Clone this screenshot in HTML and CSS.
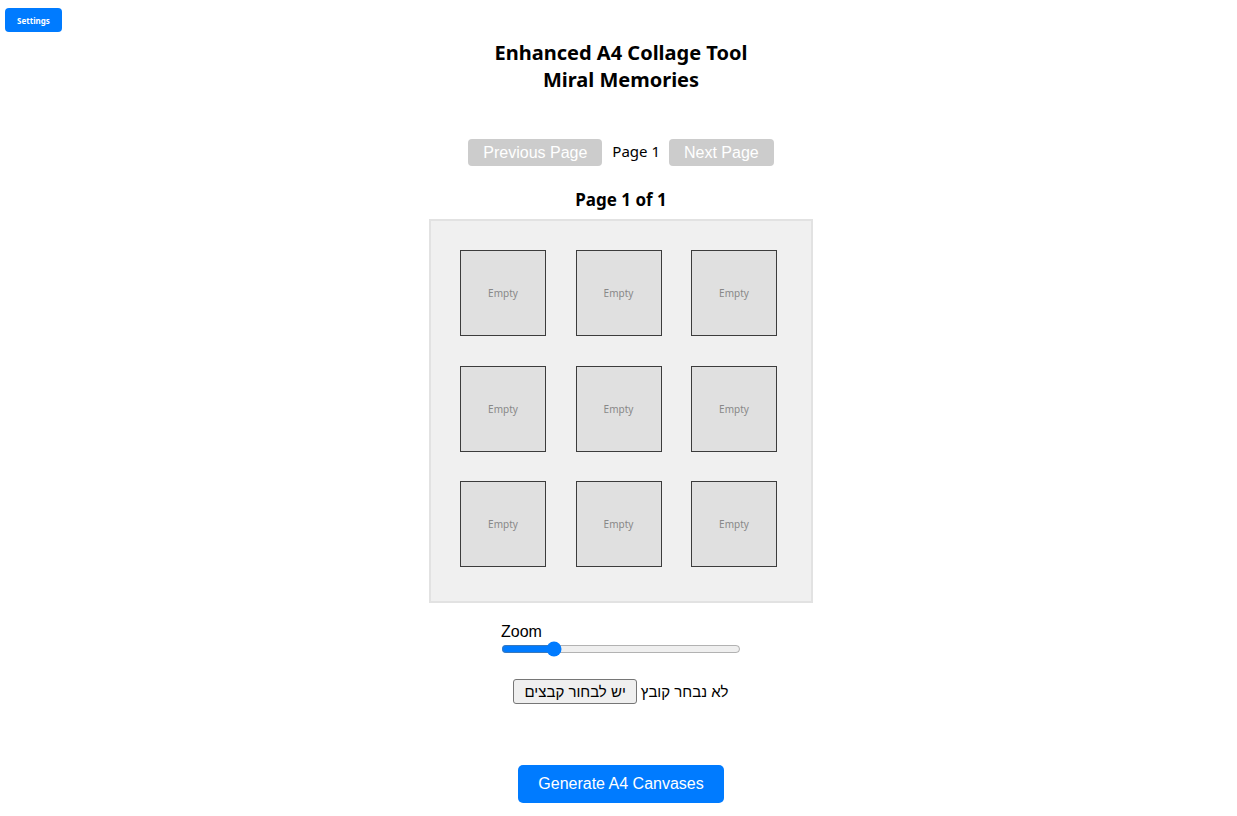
FILE: index.html
```html
<!DOCTYPE html>
<html lang="en">
<head>
<meta charset="utf-8">
<title>Enhanced A4 Collage Tool</title>
<link rel="stylesheet" href="styles.css">
</head>
<body>
<button class="settings-btn">Settings</button>
<main class="app">
  <h1 class="title">Enhanced A4 Collage Tool<br>Miral Memories</h1>
  <div class="pager">
    <button class="pager-btn" disabled>Previous Page</button>
    <span class="pager-label">Page 1</span>
    <button class="pager-btn" disabled>Next Page</button>
  </div>
  <div class="page-heading">Page 1 of 1</div>
  <div class="canvas">
    <div class="cell">Empty</div>
    <div class="cell">Empty</div>
    <div class="cell">Empty</div>
    <div class="cell">Empty</div>
    <div class="cell">Empty</div>
    <div class="cell">Empty</div>
    <div class="cell">Empty</div>
    <div class="cell">Empty</div>
    <div class="cell">Empty</div>
  </div>
  <div class="zoom">
    <label class="zoom-label" for="zoom">Zoom</label>
    <input class="zoom-range" id="zoom" type="range" min="0.5" max="3" step="0.1" value="1">
  </div>
  <div class="file-row">
    <button class="file-btn">יש לבחור קבצים</button>
    <span class="file-text">לא נבחר קובץ</span>
  </div>
  <button class="generate-btn">Generate A4 Canvases</button>
</main>
</body>
</html>
```
FILE: styles.css
```css
body {
  margin: 0;
  font-family: "Noto Sans", "DejaVu Sans", sans-serif;
  color: #000;
  background: #fff;
}

.settings-btn {
  position: fixed;
  top: 8px;
  left: 5px;
  width: 57px;
  height: 24px;
  border: none;
  border-radius: 4px;
  background: #007bff;
  color: #fff;
  font-family: "Noto Sans", sans-serif;
  font-size: 8px;
  font-weight: 700;
  padding: 0;
}

.app {
  display: flex;
  flex-direction: column;
  align-items: center;
  padding-top: 39px;
  padding-left: 5px;
}

.title {
  margin: 0;
  font-size: 20px;
  font-weight: 700;
  line-height: 27px;
  text-align: center;
}

.pager {
  display: flex;
  align-items: center;
  margin-top: 46px;
  height: 27px;
}

.pager-btn {
  height: 27px;
  padding: 0 15px;
  border: none;
  border-radius: 4px;
  background: #cccccc;
  color: #fff;
  font-family: "Liberation Sans", Arial, sans-serif;
  font-size: 16px;
}

.pager-label {
  margin: 0 9px 0 10px;
  font-size: 15px;
  line-height: 20px;
  position: relative;
  top: -2px;
}

.page-heading {
  margin-top: 22px;
  font-size: 17px;
  font-weight: 700;
  line-height: 23px;
}

.canvas {
  margin-top: 8px;
  box-sizing: border-box;
  width: 384px;
  height: 384px;
  padding: 29px;
  border: 2px solid #e2e2e2;
  background: #f0f0f0;
  display: grid;
  grid-template-columns: repeat(3, 86px);
  grid-template-rows: repeat(3, 86px);
  gap: 29.5px;
  justify-content: start;
  align-content: start;
}

.cell {
  box-sizing: border-box;
  border: 1px solid #3c3c3c;
  background: #e0e0e0;
  color: #888;
  font-size: 10px;
  display: flex;
  align-items: center;
  justify-content: center;
}

.zoom {
  margin-top: 19px;
  width: 240px;
  display: flex;
  flex-direction: column;
  align-items: flex-start;
}

.zoom-label {
  font-family: "Liberation Sans", Arial, sans-serif;
  font-size: 16px;
  line-height: 19px;
}

.zoom-range {
  display: block;
  width: 240px;
  height: 16px;
  margin: 0;
  accent-color: #007bff;
}

.file-row {
  margin-top: 22px;
  display: flex;
  align-items: center;
  height: 25px;
  font-family: "Liberation Sans", "DejaVu Sans", sans-serif;
  font-size: 15px;
}

.file-btn {
  box-sizing: border-box;
  height: 25px;
  padding: 0 10px;
  border: 1px solid #767676;
  border-radius: 3px;
  background: #efefef;
  color: #000;
  font-family: "Liberation Sans", "DejaVu Sans", sans-serif;
  font-size: 15px;
}

.file-text {
  margin-left: 4px;
}

.generate-btn {
  margin-top: 61px;
  height: 38px;
  padding: 0 20px;
  border: none;
  border-radius: 5px;
  background: #007bff;
  color: #fff;
  font-family: "Liberation Sans", Arial, sans-serif;
  font-size: 16px;
}
```
